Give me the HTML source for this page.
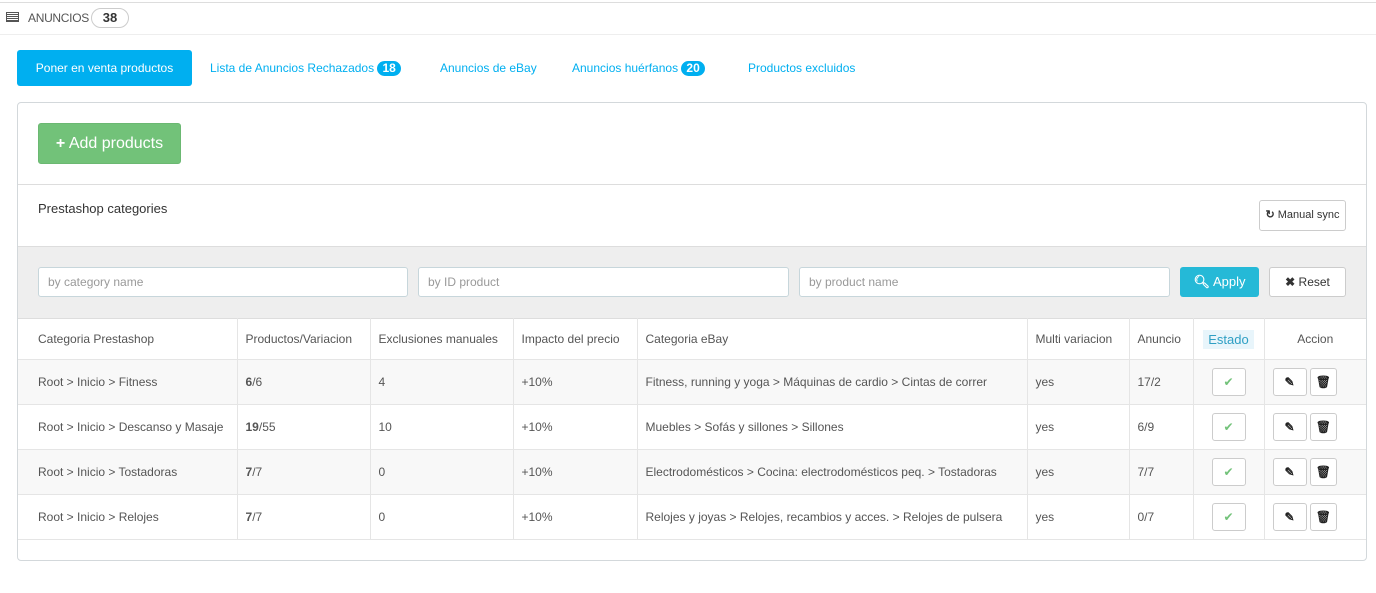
<!DOCTYPE html>
<html><head><meta charset="utf-8"><style>
*{box-sizing:border-box;margin:0;padding:0}
body{width:1376px;height:593px;background:#fff;font-family:"Liberation Sans",sans-serif;font-size:12px;color:#555;position:relative;overflow:hidden}
.abs{position:absolute}
.topline{left:0;top:2px;width:1376px;height:1px;background:#ddd}
.hdr{left:0;top:34px;width:1376px;height:1px;background:#eee}
.tab{top:50px;height:36px;line-height:37px;color:#00aff0;font-size:12px}
.badge{display:inline-block;background:#00aff0;color:#fff;border-radius:9px;padding:0 5px;line-height:15px;font-size:12px;font-weight:bold}
.panel{left:17px;top:102px;width:1350px;height:459px;border:1px solid #d3d8db;border-radius:4px}
.inp{top:267px;height:30px;border:1px solid #c7d6db;border-radius:3px;background:#fff;color:#999;padding-left:9px;line-height:28px}
.btnw{background:#fff;border:1px solid #ccc;border-radius:3px;color:#333;text-align:center}
table{position:absolute;left:18px;top:318px;width:1348px;border-collapse:collapse}
td{height:45px;padding-left:20px;border-right:1px solid #e5e5e5;border-bottom:1px solid #e5e5e5;color:#555}
tr.h td{height:41px;color:#555;border-top:1px solid #ddd}
tr:nth-child(even) td{background:#f8f8f8}
td:last-child{border-right:none}
.ib{display:inline-block;width:34px;height:28px;border:1px solid #ccc;border-radius:3px;background:#fff;vertical-align:middle;text-align:center;line-height:26px;color:#222}
</style></head><body>
<div class="abs topline"></div>
<div class="abs" style="left:6px;top:12px;width:13px;height:10px;border:1px solid #555;background:repeating-linear-gradient(#fff 0 1px,#555 1px 2px)"></div>
<div class="abs" style="left:28px;top:11px;font-size:12px;color:#555;letter-spacing:-0.3px">ANUNCIOS</div>
<div class="abs" style="left:91px;top:8px;width:38px;height:20px;border:1px solid #ccc;border-radius:10px;text-align:center;line-height:18px;font-weight:bold;color:#333;font-size:13px">38</div>
<div class="abs hdr"></div>
<div class="abs tab" style="left:17px;width:175px;background:#00aff0;color:#fff;border-radius:3px;text-align:center">Poner en venta productos</div>
<div class="abs tab" style="left:210px">Lista de Anuncios Rechazados <span class="badge">18</span></div>
<div class="abs tab" style="left:440px">Anuncios de eBay</div>
<div class="abs tab" style="left:572px">Anuncios huérfanos <span class="badge">20</span></div>
<div class="abs tab" style="left:748px">Productos excluidos</div>
<div class="abs panel"></div>
<div class="abs" style="left:38px;top:123px;width:143px;height:41px;background:#72c279;border:1px solid #6bb872;border-radius:3px;color:#fff;font-size:16px;line-height:39px;text-align:center"><b>+</b> Add products</div>
<div class="abs" style="left:18px;top:184px;width:1348px;height:1px;background:#ddd"></div>
<div class="abs" style="left:38px;top:201px;font-size:13px;color:#333">Prestashop categories</div>
<div class="abs btnw" style="left:1259px;top:200px;width:87px;height:31px;line-height:29px;font-size:11px"><b>&#x21bb;</b> Manual sync</div>
<div class="abs" style="left:18px;top:246px;width:1348px;height:72px;background:#eee;border-top:1px solid #ddd"></div>
<div class="abs inp" style="left:38px;width:370px">by category name</div>
<div class="abs inp" style="left:418px;width:371px">by ID product</div>
<div class="abs inp" style="left:799px;width:371px">by product name</div>
<div class="abs" style="left:1180px;top:267px;width:79px;height:30px;background:#25b9d7;border-radius:3px;color:#fff;line-height:30px;text-align:center;font-size:13px"><b>&#x1F50D;&#xFE0E;</b> Apply</div>
<div class="abs btnw" style="left:1269px;top:267px;width:77px;height:30px;line-height:28px"><b>✖</b> Reset</div>
<table>
<tr class="h"><td style="width:219px">Categoria Prestashop</td><td style="width:133px;padding-left:8px">Productos/Variacion</td><td style="width:143px;padding-left:8px">Exclusiones manuales</td><td style="width:124px;padding-left:8px">Impacto del precio</td><td style="width:390px;padding-left:8px">Categoria eBay</td><td style="width:102px;padding-left:8px">Multi variacion</td><td style="width:64px;padding-left:8px">Anuncio</td><td style="width:71px;text-align:center;padding:0"><span style="background:#e8f5fb;color:#2e9fc4;padding:2px 5px;font-size:13px">Estado</span></td><td style="text-align:center;padding:0">Accion</td></tr>
<tr><td>Root &gt; Inicio &gt; Fitness</td><td style="padding-left:8px"><b>6</b>/6</td><td style="padding-left:8px">4</td><td style="padding-left:8px">+10%</td><td style="padding-left:8px">Fitness, running y yoga &gt; Máquinas de cardio &gt; Cintas de correr</td><td style="padding-left:8px">yes</td><td style="padding-left:8px">17/2</td><td style="text-align:center;padding:0"><span class="ib" style="color:#72c279">✔</span></td><td style="padding-left:8px"><span class="ib"><b>✎</b></span> <span class="ib" style="width:27px"><b>🗑&#xFE0E;</b></span></td></tr>
<tr><td>Root &gt; Inicio &gt; Descanso y Masaje</td><td style="padding-left:8px"><b>19</b>/55</td><td style="padding-left:8px">10</td><td style="padding-left:8px">+10%</td><td style="padding-left:8px">Muebles &gt; Sofás y sillones &gt; Sillones</td><td style="padding-left:8px">yes</td><td style="padding-left:8px">6/9</td><td style="text-align:center;padding:0"><span class="ib" style="color:#72c279">✔</span></td><td style="padding-left:8px"><span class="ib"><b>✎</b></span> <span class="ib" style="width:27px"><b>🗑&#xFE0E;</b></span></td></tr>
<tr><td>Root &gt; Inicio &gt; Tostadoras</td><td style="padding-left:8px"><b>7</b>/7</td><td style="padding-left:8px">0</td><td style="padding-left:8px">+10%</td><td style="padding-left:8px">Electrodomésticos &gt; Cocina: electrodomésticos peq. &gt; Tostadoras</td><td style="padding-left:8px">yes</td><td style="padding-left:8px">7/7</td><td style="text-align:center;padding:0"><span class="ib" style="color:#72c279">✔</span></td><td style="padding-left:8px"><span class="ib"><b>✎</b></span> <span class="ib" style="width:27px"><b>🗑&#xFE0E;</b></span></td></tr>
<tr><td>Root &gt; Inicio &gt; Relojes</td><td style="padding-left:8px"><b>7</b>/7</td><td style="padding-left:8px">0</td><td style="padding-left:8px">+10%</td><td style="padding-left:8px">Relojes y joyas &gt; Relojes, recambios y acces. &gt; Relojes de pulsera</td><td style="padding-left:8px">yes</td><td style="padding-left:8px">0/7</td><td style="text-align:center;padding:0"><span class="ib" style="color:#72c279">✔</span></td><td style="padding-left:8px"><span class="ib"><b>✎</b></span> <span class="ib" style="width:27px"><b>🗑&#xFE0E;</b></span></td></tr>
</table>
</body></html>
